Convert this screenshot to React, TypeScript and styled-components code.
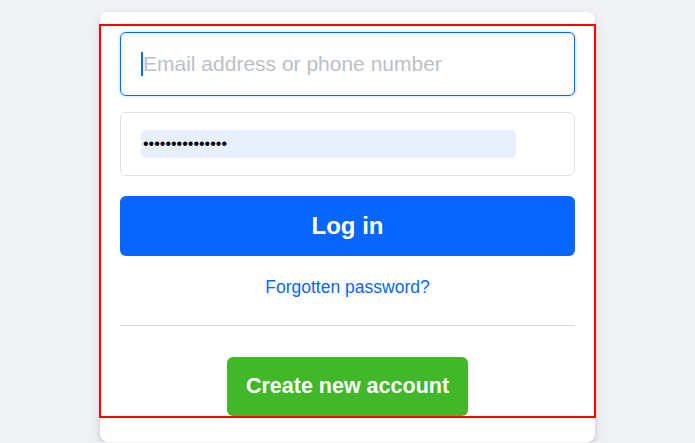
import styled, { createGlobalStyle } from 'styled-components';

const GlobalStyle = createGlobalStyle`
    body {
        margin: 0;
        background: #f0f2f5;
        font-family: "Liberation Sans", Arial, Helvetica, sans-serif;
    }
`

const Page = styled.main`
    padding: 12px 0 0 100px;
`

const Card = styled.section`
    width: 495px;
    box-sizing: border-box;
    padding: 13px 0 25px;
    background: #fff;
    border-radius: 8px;
    box-shadow: 0 2px 4px rgba(0, 0, 0, 0.1), 0 8px 16px rgba(0, 0, 0, 0.1);
`

const Form = styled.form`
    display: flex;
    flex-direction: column;
    padding: 7px 20px 1px;
    outline: 2px solid #ff0000;
    outline-offset: -1px;
`

const Field = styled.div`
    position: relative;
    display: flex;
`

const Caret = styled.span`
    position: absolute;
    left: 21px;
    top: 20px;
    width: 2px;
    height: 24px;
    background: #0866ff;
    pointer-events: none;
`

const TextInput = styled.input`
    flex: 1;
    height: 64px;
    box-sizing: border-box;
    padding: 0 20px 0 22px;
    border: 1px solid #dddfe2;
    border-radius: 6px;
    font-family: inherit;
    font-size: 21px;
    color: #1c1e21;
    caret-color: transparent;
    outline: none;
    &::placeholder {
        color: #bcc0c4;
    }
    &:focus {
        border-color: #0866ff;
        box-shadow: 0 0 0 2px #e7f3ff;
    }
`

const PasswordBox = styled.div`
    display: flex;
    align-items: center;
    height: 64px;
    box-sizing: border-box;
    margin-top: 16px;
    padding: 0 20px;
    border: 1px solid #dddfe2;
    border-radius: 6px;
`

const PasswordField = styled.input`
    width: 375px;
    height: 28px;
    box-sizing: border-box;
    padding: 0 2px;
    border: none;
    border-radius: 5px;
    background: #e8f0fe;
    font-family: inherit;
    font-size: 16px;
    color: #000;
    outline: none;
`

const LoginButton = styled.button`
    height: 60px;
    margin-top: 20px;
    border: none;
    border-radius: 6px;
    background: #0866ff;
    color: #fff;
    font-family: inherit;
    font-size: 24px;
    font-weight: 700;
    cursor: pointer;
`

const Forgot = styled.a`
    display: block;
    margin-top: 21px;
    line-height: 20px;
    text-align: center;
    font-size: 17.5px;
    color: #0866ff;
    text-decoration: none;
`

const Divider = styled.hr`
    margin: 28px 0 0;
    border: none;
    border-top: 1px solid #dadde1;
`

const CreateRow = styled.div`
    display: flex;
    justify-content: center;
    padding-top: 31px;
`

const CreateButton = styled.button`
    width: 241px;
    height: 59px;
    border: none;
    border-radius: 6px;
    background: #42b72a;
    color: #fff;
    font-family: inherit;
    font-size: 21.5px;
    font-weight: 700;
    cursor: pointer;
`

export default function App() {
    return (
        <Page>
            <GlobalStyle />
            <Card>
                <Form onSubmit={e => e.preventDefault()}>
                    <Field>
                        <TextInput type="text" placeholder="Email address or phone number" autoFocus />
                        <Caret />
                    </Field>
                    <PasswordBox>
                        <PasswordField type="password" defaultValue="secretpassword1" readOnly />
                    </PasswordBox>
                    <LoginButton type="submit">Log in</LoginButton>
                    <Forgot href="#">Forgotten password?</Forgot>
                    <Divider />
                    <CreateRow>
                        <CreateButton type="button">Create new account</CreateButton>
                    </CreateRow>
                </Form>
            </Card>
        </Page>
    )
}
